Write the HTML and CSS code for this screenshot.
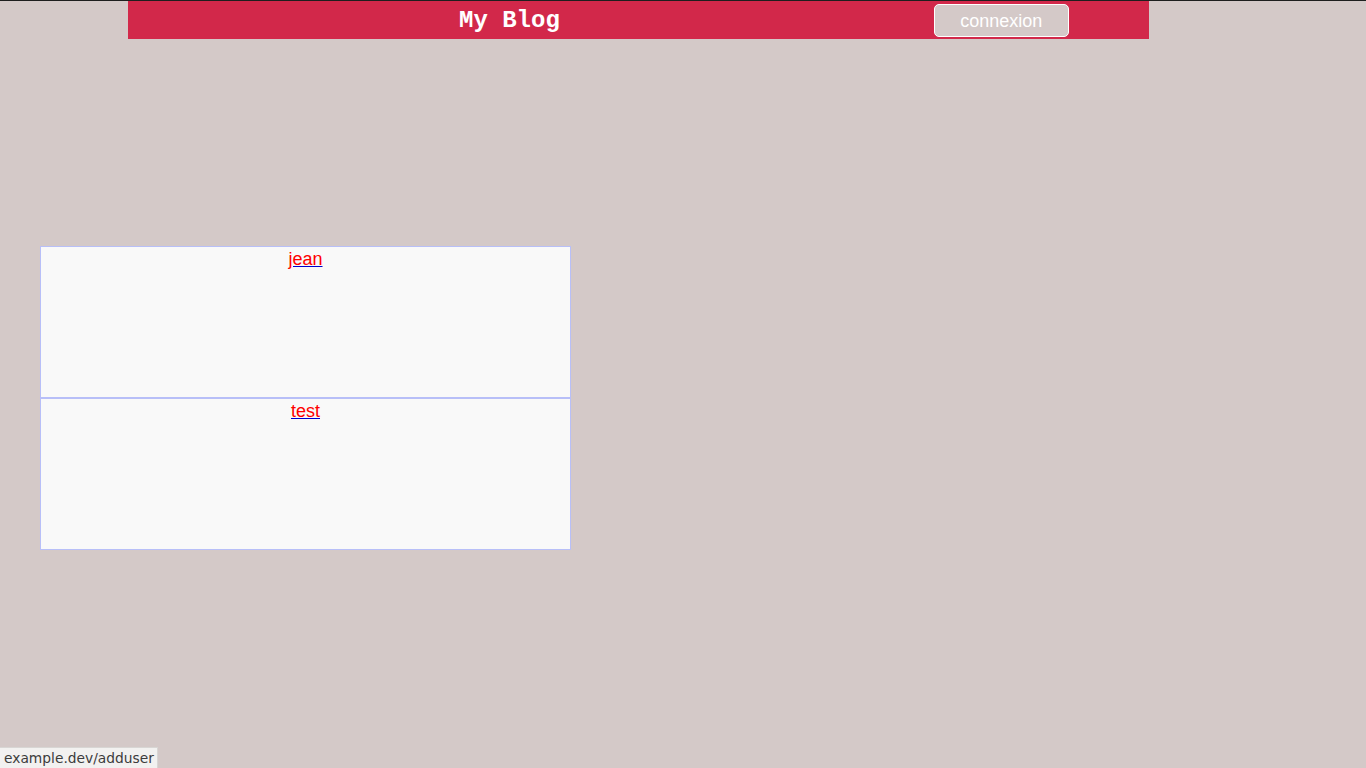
FILE: index.html
```html
<!DOCTYPE html>
<html lang="fr">
<head>
<meta charset="utf-8">
<title>My Blog</title>
<link rel="stylesheet" href="styles.css">
</head>
<body>
<div class="topline"></div>
<header class="site-header">
  <h1 class="brand">My Blog</h1>
  <button class="login">connexion</button>
</header>
<main class="users">
  <div class="card"><a href="#" class="user-link">jean</a></div>
  <div class="card"><a href="#" class="user-link">test</a></div>
</main>
<div class="status">example.dev/adduser</div>
</body>
</html>
```
FILE: styles.css
```css
html, body {
  margin: 0;
  padding: 0;
  background: #d4c9c8;
  font-family: "Liberation Sans", Arial, sans-serif;
  height: 100%;
}
.topline {
  height: 1px;
  background: #1e1e1e;
}
.site-header {
  margin-left: 128px;
  width: 1021px;
  height: 38px;
  background: #d2284a;
  display: flex;
  align-items: center;
}
.brand {
  margin: 1px 0 0 331px;
  font-family: "Liberation Mono", "Courier New", monospace;
  font-weight: bold;
  font-size: 24px;
  color: #ffffff;
  line-height: 1;
}
.login {
  margin-left: 374px;
  margin-top: 1px;
  width: 135px;
  height: 33px;
  background: #d4c9c8;
  border: 1px solid #ffffff;
  border-radius: 5px;
  color: #ffffff;
  font-family: "Liberation Sans", Arial, sans-serif;
  font-size: 18px;
  padding: 2px 0 0 0;
}
.users {
  padding-top: 207px;
  margin-left: 40px;
  width: 531px;
}
.card {
  height: 150px;
  background: #f9f9f9;
  border: 1px solid #b8bff8;
  text-align: center;
}
.user-link {
  display: inline-block;
  margin-top: 2px;
  font-size: 18px;
  color: #ff0000;
  text-decoration: underline;
  text-decoration-color: #0000cc;
}
.status {
  position: fixed;
  left: 0;
  bottom: 0;
  padding: 2px 3px 2px 4px;
  background: #f2f1f0;
  border-top: 1px solid #d8d6d4;
  border-right: 1px solid #d8d6d4;
  font-family: "DejaVu Sans", "Noto Sans", sans-serif;
  font-size: 13.8px;
  color: #3c3c3c;
}
```
